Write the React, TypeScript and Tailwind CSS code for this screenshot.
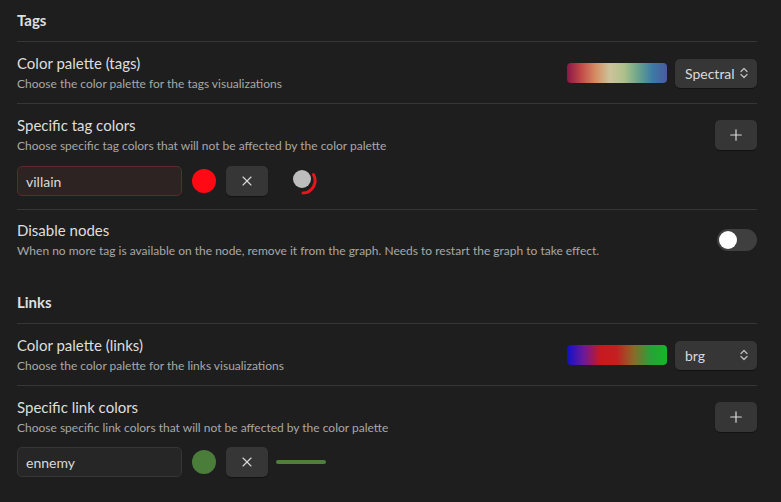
import { X, Plus } from "lucide-react";

const font = "font-['Lato','Noto_Sans',sans-serif]";

const Chevrons = () => (
  <svg width="10" height="12" viewBox="0 0 10 12" fill="none" stroke="#bdbdbd" strokeWidth="1.3" strokeLinecap="round" strokeLinejoin="round">
    <path d="M2 4.5 L5 1.5 L8 4.5" />
    <path d="M2 7.5 L5 10.5 L8 7.5" />
  </svg>
);

const Select = ({ value }: { value: string }) => (
  <div className="flex h-[29px] w-[82px] items-center justify-between rounded-[5px] bg-[#363636] pl-[10px] pr-[8px] text-[14px] text-[#dadada] shadow-[0_1px_1px_rgba(0,0,0,0.4)]">
    <span>{value}</span>
    <Chevrons />
  </div>
);

const IconButton = ({ children }: { children: React.ReactNode }) => (
  <div className="flex h-[30px] w-[42px] items-center justify-center rounded-[5px] bg-[#363636] text-[#dadada] shadow-[0_1px_1px_rgba(0,0,0,0.4)]">
    {children}
  </div>
);

const Info = ({ name, desc }: { name: string; desc: string }) => (
  <div className="flex flex-col">
    <div className="text-[15px] leading-[20px] text-[#dedede]">{name}</div>
    <div className="mt-[2px] text-[12px] leading-[18px] text-[#a8a8a8]">{desc}</div>
  </div>
);

const Heading = ({ title, top }: { title: string; top: string }) => (
  <div className={`${top} pb-[11px] text-[15px] font-bold leading-[20px] text-[#dedede]`}>{title}</div>
);

const NodePreview = () => (
  <svg width="32" height="32" viewBox="0 0 32 32">
    <circle cx="15" cy="14" r="9" fill="#bdbdbd" />
    <path d="M26.5 9.5 A12.5 12.5 0 0 1 16 28" fill="none" stroke="#e8141e" strokeWidth="3" strokeLinecap="round" />
  </svg>
);

const ColorRow = ({
  value,
  color,
  border,
  bg,
  preview,
}: {
  value: string;
  color: string;
  border: string;
  bg: string;
  preview: React.ReactNode;
}) => (
  <div className="mt-[10px] flex items-center">
    <div
      className={`flex h-[30px] w-[165px] items-center rounded-[5px] border px-[8px] text-[14px] text-[#dadada] ${border} ${bg}`}
    >
      {value}
    </div>
    <div className={`ml-[10px] h-[24px] w-[24px] rounded-full ${color}`} />
    <div className="ml-[10px]">
      <IconButton>
        <X size={16} strokeWidth={1.6} />
      </IconButton>
    </div>
    {preview}
  </div>
);

export default function App() {
  return (
    <div className={`min-h-[502px] w-[781px] bg-[#1e1e1e] pl-[17px] pr-[24px] ${font}`}>
      <Heading title="Tags" top="pt-[10px]" />

      <div className="flex items-center justify-between border-t border-[#363636] pb-[10px] pt-[11px]">
        <Info name="Color palette (tags)" desc="Choose the color palette for the tags visualizations" />
        <div className="flex items-center gap-[8px]">
          <div className="h-[20px] w-[100px] rounded-[4px] bg-[linear-gradient(to_right,#8a1747,#c24a48,#d58d62,#cdc39a,#adc08a,#6aa38c,#3c7aa6,#4a5a9e)]" />
          <Select value="Spectral" />
        </div>
      </div>

      <div className="border-t border-[#363636] pb-[12px] pt-[11px]">
        <div className="flex items-center justify-between">
          <Info name="Specific tag colors" desc="Choose specific tag colors that will not be affected by the color palette" />
          <IconButton>
            <Plus size={18} strokeWidth={1.6} />
          </IconButton>
        </div>
        <ColorRow
          value="villain"
          color="bg-[#ff0a14]"
          border="border-[#5e2a2a]"
          bg="bg-[#2e2323]"
          preview={
            <div className="ml-[19px]">
              <NodePreview />
            </div>
          }
        />
      </div>

      <div className="flex items-center justify-between border-t border-[#363636] pb-[10px] pt-[10px]">
        <Info
          name="Disable nodes"
          desc="When no more tag is available on the node, remove it from the graph. Needs to restart the graph to take effect."
        />
        <div className="flex h-[22px] w-[40px] items-center rounded-full bg-[#3f3f3f] px-[2px]">
          <div className="h-[18px] w-[18px] rounded-full bg-white" />
        </div>
      </div>

      <Heading title="Links" top="pt-[22px]" />

      <div className="flex items-center justify-between border-t border-[#363636] pb-[10px] pt-[11px]">
        <Info name="Color palette (links)" desc="Choose the color palette for the links visualizations" />
        <div className="flex items-center gap-[8px]">
          <div className="h-[20px] w-[100px] rounded-[4px] bg-[linear-gradient(to_right,#1010c8,#6a1a9a,#c81820,#c42020,#8a6a2a,#2aa03a,#12b828)]" />
          <Select value="brg" />
        </div>
      </div>

      <div className="border-t border-[#363636] pb-[12px] pt-[11px]">
        <div className="flex items-center justify-between">
          <Info name="Specific link colors" desc="Choose specific link colors that will not be affected by the color palette" />
          <IconButton>
            <Plus size={18} strokeWidth={1.6} />
          </IconButton>
        </div>
        <ColorRow
          value="ennemy"
          color="bg-[#4a7c3a]"
          border="border-[#363636]"
          bg="bg-[#262626]"
          preview={<div className="ml-[8px] h-[4px] w-[50px] rounded-full bg-[#4e7f3d]" />}
        />
      </div>
    </div>
  );
}
